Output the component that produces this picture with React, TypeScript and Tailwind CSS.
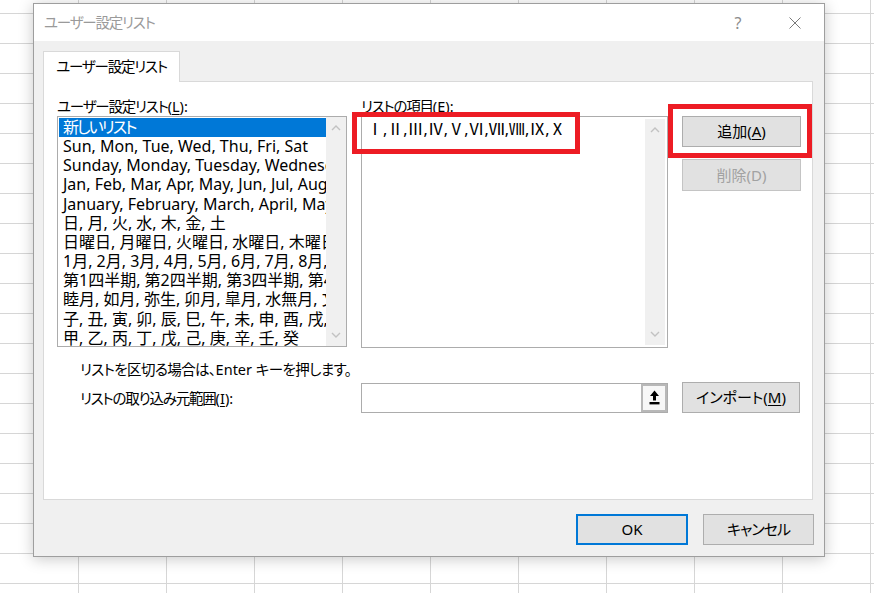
import type { ReactNode } from 'react';

const FONT = "[font-family:'Noto_Sans','Noto_Sans_CJK_JP',sans-serif] [font-feature-settings:'palt']";
// Yu Gothic UI kana are narrow, so the kana parts get tightened up
const KANA = 'tracking-[-1.2px]';

const listItems = [
  '新しいリスト',
  'Sun, Mon, Tue, Wed, Thu, Fri, Sat',
  'Sunday, Monday, Tuesday, Wednesday, Thursday, Friday, Saturday',
  'Jan, Feb, Mar, Apr, May, Jun, Jul, Aug, Sep, Oct, Nov, Dec',
  'January, February, March, April, May, June, July, August, September, October, November, December',
  '日, 月, 火, 水, 木, 金, 土',
  '日曜日, 月曜日, 火曜日, 水曜日, 木曜日, 金曜日, 土曜日',
  '1月, 2月, 3月, 4月, 5月, 6月, 7月, 8月, 9月, 10月, 11月, 12月',
  '第1四半期, 第2四半期, 第3四半期, 第4四半期',
  '睦月, 如月, 弥生, 卯月, 皐月, 水無月, 文月, 葉月, 長月, 神無月, 霜月, 師走',
  '子, 丑, 寅, 卯, 辰, 巳, 午, 未, 申, 酉, 戌, 亥',
  '甲, 乙, 丙, 丁, 戊, 己, 庚, 辛, 壬, 癸',
];

function Chevron({ up }: { up?: boolean }) {
  return (
    <svg width="10" height="6" viewBox="0 0 10 6" className="block">
      <polyline
        points={up ? '1,5 5,1 9,5' : '1,1 5,5 9,1'}
        fill="none"
        stroke="#c2c2c2"
        strokeWidth="1.4"
      />
    </svg>
  );
}

function ScrollBar() {
  return (
    <div className="flex h-full w-[20px] shrink-0 flex-col items-center justify-between bg-[#f0f0f0] py-[8px]">
      <Chevron up />
      <Chevron />
    </div>
  );
}

function Button({
  children,
  disabled,
  primary,
  className = '',
}: {
  children: ReactNode;
  disabled?: boolean;
  primary?: boolean;
  className?: string;
}) {
  const border = primary
    ? 'border-2 border-[#0078d7]'
    : disabled
      ? 'border border-[#c4c4c4]'
      : 'border border-[#adadad]';
  return (
    <button
      className={`flex items-center justify-center bg-[#e1e1e1] text-[15px] text-black ${border} ${className}`}
    >
      <span className={disabled ? 'text-[#a2a2a2]' : ''}>{children}</span>
    </button>
  );
}

function Key({ k }: { k: string }) {
  return (
    <>
      (<span className="underline underline-offset-2">{k}</span>)
    </>
  );
}

export default function App() {
  return (
    <div
      className={`relative h-[593px] w-[874px] overflow-hidden bg-white ${FONT} [background-image:linear-gradient(to_right,#d6d6d6_1px,transparent_1px),linear-gradient(to_bottom,#d6d6d6_1px,transparent_1px)] [background-size:88px_30px] [background-position:78px_13px]`}
    >
      {/* dialog window */}
      <div className="absolute left-[33px] top-[3px] flex h-[554px] w-[792px] flex-col border border-[#9e9e9e] bg-[#f0f0f0] shadow-[0_2px_14px_rgba(0,0,0,0.22)]">
        {/* title bar */}
        <div className="flex h-[37px] items-center bg-white pl-[10px]">
          <span className={`text-[14.5px] text-[#9a9a9a] ${KANA}`}>ユーザー設定リスト</span>
          <div className="ml-auto flex h-full items-center pr-[6px]">
            <div className="flex w-[46px] justify-center text-[16px] text-[#8c8c8c]">?</div>
            <div className="w-[11px]" />
            <div className="flex w-[46px] justify-center">
              <svg width="12" height="12" viewBox="0 0 12 12">
                <path d="M0.5 0.5 L11.5 11.5 M11.5 0.5 L0.5 11.5" stroke="#7a7a7a" strokeWidth="1" />
              </svg>
            </div>
          </div>
        </div>

        {/* body */}
        <div className="flex flex-1 flex-col px-[9px] pt-[10px]">
          <div className="flex">
            <div
              className={`relative z-10 -mb-px flex h-[31px] w-[137px] items-center justify-center border border-b-0 border-[#d9d9d9] bg-white text-[14.5px] text-black ${KANA}`}
            >
              ユーザー設定リスト
            </div>
          </div>

          <div className="flex h-[419px] w-[770px] flex-col border border-[#d9d9d9] bg-white pl-[13px] pt-[14px] text-[14.5px] text-black">
            <div className="flex gap-[14px]">
              {/* custom lists */}
              <div className="flex w-[290px] flex-col">
                <div className="h-[20px] leading-[20px]">
                  <span className={KANA}>ユーザー設定リスト</span>
                  <Key k="L" />:
                </div>
                <div className="flex h-[231px] border border-[#acacac] bg-white">
                  <div className="flex min-w-0 flex-1 flex-col overflow-hidden pl-[1px] pt-[1px]">
                    {listItems.map((item, i) => (
                      <div
                        key={item}
                        className={`shrink-0 overflow-hidden whitespace-nowrap px-[4px] text-[16px] leading-[19.15px] ${
                          i === 0 ? 'bg-[#0078d7] tracking-[-2px] text-white' : ''
                        }`}
                      >
                        {item}
                      </div>
                    ))}
                  </div>
                  <ScrollBar />
                </div>
              </div>

              {/* list entries */}
              <div className="flex w-[307px] flex-col">
                <div className="h-[20px] leading-[20px]">
                  <span className={KANA}>リストの項目</span>
                  <Key k="E" />:
                </div>
                <div className="relative flex h-[232px] border border-[#acacac] bg-white">
                  <div className="flex-1 whitespace-nowrap pl-[5px] pt-[2px] text-[16px] leading-[20px]">
                    Ⅰ,Ⅱ,Ⅲ,Ⅳ,Ⅴ,Ⅵ,Ⅶ,Ⅷ,Ⅸ,Ⅹ
                  </div>
                  <div className="py-[2px] pr-[2px]">
                    <ScrollBar />
                  </div>
                  <div className="pointer-events-none absolute left-[-10px] top-[-5px] h-[42px] w-[228px] border-[5px] border-[#ed1c24]" />
                </div>
              </div>

              {/* action buttons */}
              <div className="flex w-[119px] flex-col gap-[12px] pt-[20px]">
                <div className="relative">
                  <Button className="h-[31px] w-[119px]">
                    追加<Key k="A" />
                  </Button>
                  <div className="pointer-events-none absolute left-[-14px] top-[-12px] h-[54px] w-[144px] border-[5px] border-[#ed1c24]" />
                </div>
                <Button disabled className="h-[32px] w-[119px]">
                  削除(D)
                </Button>
              </div>
            </div>

            <div className="mt-[11px] h-[20px] pl-[23px] leading-[20px]">
              <span className="tracking-[-0.6px]">リストを区切る場合は、</span>Enter{' '}
              <span className="tracking-[-0.6px]">キーを押します。</span>
            </div>

            <div className="mt-[3px] flex items-center">
              <div className="w-[304px] pl-[23px] leading-[20px]">
                <span className={KANA}>リストの取り込み元範囲</span>
                <Key k="I" />:
              </div>
              <div className="flex h-[30px] w-[307px] border border-[#acacac] bg-white">
                <div className="flex-1" />
                <div className="flex h-full w-[26px] items-center justify-center border-2 border-[#b8b8b8] bg-[#f7f7f7]">
                  <svg width="11" height="15" viewBox="0 0 11 15">
                    <path d="M5.5 0.5 L10 6 L7 6 L7 10.5 L4 10.5 L4 6 L1 6 Z" fill="#000" />
                    <rect x="0.5" y="12" width="10" height="2.4" fill="#000" />
                  </svg>
                </div>
              </div>
              <Button className="ml-[14px] h-[31px] w-[118px]">
                インポート<Key k="M" />
              </Button>
            </div>
          </div>

          <div className="mt-[14px] flex justify-end gap-[15px] pr-[1px]">
            <Button primary className="h-[31px] w-[112px]">
              OK
            </Button>
            <Button className="h-[31px] w-[111px]">
              <span className="tracking-[-1px]">キャンセル</span>
            </Button>
          </div>
        </div>
      </div>
    </div>
  );
}
